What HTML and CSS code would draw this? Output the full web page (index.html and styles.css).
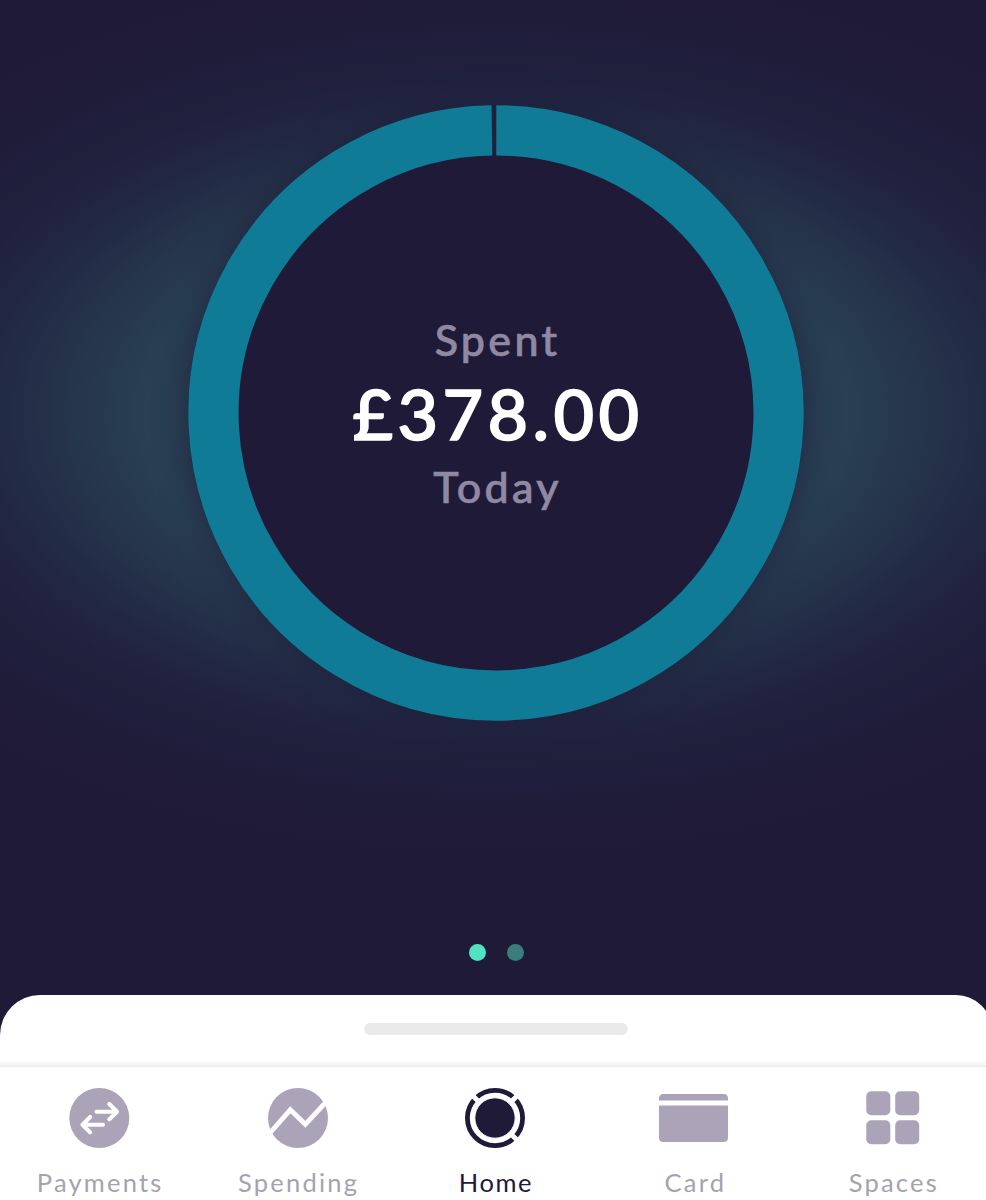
FILE: index.html
```
<!DOCTYPE html>
<html lang="en">
  <head>
    <meta charset="UTF-8">
    <title>Home</title>
    <link rel="stylesheet" href="styles.css">
  </head>
  <body>
    <div class="app">
      <main class="hero">
        <div class="ring">
          <svg class="ring-chart" width="616" height="616" viewBox="0 0 616 616" fill="none">
            <path d="M308.3 25.4A282.6 282.6 0 1 1 303.9 25.43" stroke="#0f7b97" stroke-width="50.3" />
          </svg>
          <div class="summary">
            <div class="summary-label">Spent</div>
            <div class="amount">£378.00</div>
            <div class="summary-label today">Today</div>
          </div>
        </div>
        <div class="dots">
          <span class="dot active"></span>
          <span class="dot"></span>
        </div>
      </main>

      <section class="sheet">
        <div class="handle"></div>
      </section>

      <nav class="tabs">
        <a class="tab">
          <svg width="70" height="62" viewBox="0 0 70 62" fill="none">
            <circle cx="35.3" cy="31" r="30" fill="#aba3b7" />
            <path d="M32.5 24.7H52M45.3 17L53 24.7L45.3 32.4M39 37.7H18.5M26.2 30L18.5 37.7L26.2 45.4" stroke="#fff" stroke-width="4.1" stroke-linecap="round" stroke-linejoin="round" />
          </svg>
          <span>Payments</span>
        </a>
        <a class="tab">
          <svg width="70" height="62" viewBox="0 0 70 62" fill="none">
            <circle cx="35" cy="31" r="30" fill="#aba3b7" />
            <path d="M6.5 46.5L27.3 22.8L42.3 37.3L64 14" stroke="#fff" stroke-width="4.8" />
          </svg>
          <span>Spending</span>
        </a>
        <a class="tab selected">
          <svg width="70" height="62" viewBox="0 0 70 62" fill="none">
            <circle cx="34" cy="31" r="27.6" stroke="#1f1a38" stroke-width="4.8" />
            <path d="M34 31L11 8M34 31L57 8M34 31L57 54" stroke="#fff" stroke-width="4.8" />
            <circle cx="34" cy="31" r="20.2" fill="#1f1a38" stroke="#fff" stroke-width="1" />
          </svg>
          <span>Home</span>
        </a>
        <a class="tab">
          <svg width="70" height="62" viewBox="0 0 70 62" fill="#aba3b7">
            <path d="M0 13.6V11.5Q0 7 4.5 7H64.5Q69 7 69 11.5V13.6Z" />
            <path d="M0 18.5H69V50.5Q69 55 64.5 55H4.5Q0 55 0 50.5Z" />
          </svg>
          <span>Card</span>
        </a>
        <a class="tab">
          <svg width="70" height="62" viewBox="0 0 70 62" fill="#aba3b7">
            <rect x="8.3" y="4.3" width="24" height="24" rx="5" />
            <rect x="37.2" y="4.3" width="24" height="24" rx="5" />
            <rect x="8.3" y="33.2" width="24" height="24" rx="5" />
            <rect x="37.2" y="33.2" width="24" height="24" rx="5" />
          </svg>
          <span>Spaces</span>
        </a>
      </nav>
    </div>
  </body>
</html>
```
FILE: styles.css
```
html {
  overflow: hidden;
}
body {
  margin: 0;
  background-color: #1f1a38;
  font-family: Lato, "Liberation Sans", sans-serif;
}
.app {
  display: flex;
  flex-direction: column;
  width: 992px;
  height: 1200px;
  overflow: hidden;
  background: radial-gradient(
    ellipse 800px 465px at 496px 412px,
    #2a4659 0%,
    #283f54 44%,
    #25344b 54%,
    #222a45 62%,
    #20213e 72%,
    #1f1c3a 84%,
    #1f1a38 100%
  );
}
.hero {
  display: flex;
  flex-direction: column;
  align-items: center;
  height: 890px;
  padding-top: 105px;
}
.ring {
  display: grid;
  place-items: center;
  width: 616px;
  height: 616px;
  border-radius: 50%;
  background: radial-gradient(circle, #1f1a38 258px, #1f203d 260px);
  box-shadow: 0 0 32px rgba(31, 29, 56, 0.7);
}
.ring-chart,
.summary {
  grid-area: 1 / 1;
}
.summary {
  display: flex;
  flex-direction: column;
  align-items: center;
  color: #fff;
}
.summary-label {
  font-size: 43px;
  font-weight: 500;
  line-height: 50px;
  letter-spacing: 3.3px;
  margin-right: -3px;
  color: #9089a3;
  -webkit-text-stroke: 0.7px #9089a3;
}
.today {
  margin-top: 1px;
}
.amount {
  font-size: 70px;
  font-weight: 500;
  line-height: 96px;
  letter-spacing: 4.4px;
  margin-right: -4px;
  -webkit-text-stroke: 1.6px #fff;
}
.dots {
  display: flex;
  gap: 21px;
  margin-top: 223px;
}
.dot {
  width: 17px;
  height: 17px;
  border-radius: 50%;
  background-color: #3a7d7c;
}
.dot.active {
  background-color: #50e3c2;
}
.sheet {
  display: flex;
  justify-content: center;
  flex: 1;
  border-radius: 40px 36px 0 0;
  background: linear-gradient(#fff calc(100% - 6px), #ebebeb);
}
.handle {
  width: 264px;
  height: 12px;
  margin-top: 28px;
  border-radius: 6px;
  background-color: #eaeaea;
}
.tabs {
  display: grid;
  grid-template-columns: repeat(5, 1fr);
  height: 133px;
  background-color: #fff;
}
.tab {
  display: flex;
  flex-direction: column;
  align-items: center;
  padding-top: 20px;
  font-size: 25.5px;
  line-height: 30px;
  letter-spacing: 2.2px;
  color: #a5a2b0;
}
.tab span {
  margin-top: 18px;
  margin-right: -2px;
}
.tab.selected {
  color: #1f1a38;
  letter-spacing: 1.6px;
}
.selected span {
  margin-right: 0;
}
```
